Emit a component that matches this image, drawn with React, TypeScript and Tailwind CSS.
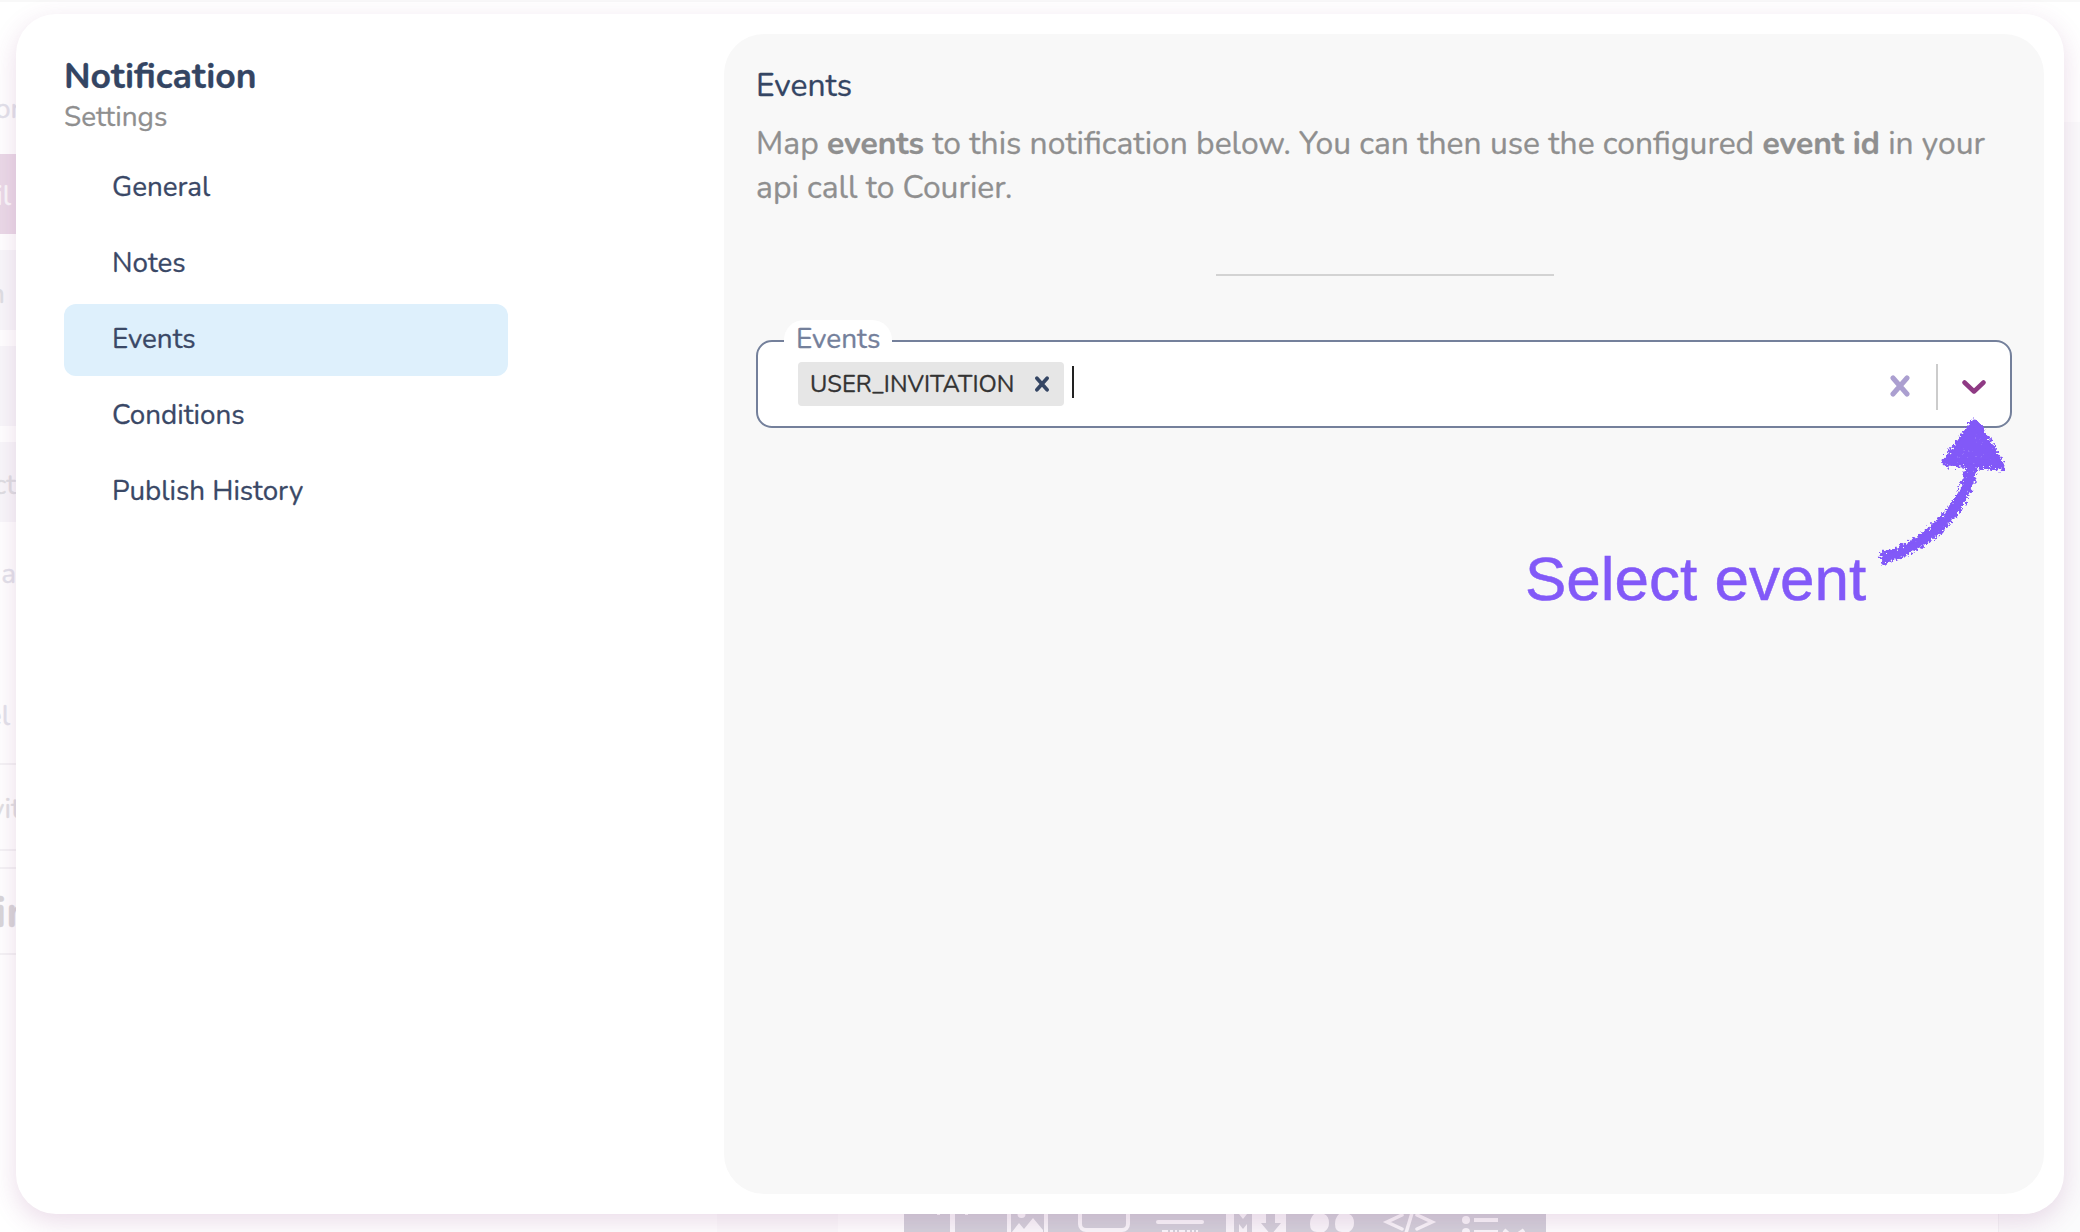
import type { ReactNode } from "react";

const navItems = ["General", "Notes", "Events", "Conditions", "Publish History"];

function CanvasSidebar() {
  return (
    <div className="flex w-4 flex-col overflow-hidden whitespace-nowrap text-[28px] leading-[38px] text-[#e2e2ea]">
      <div className="flex h-[154px] shrink-0 items-end pb-[26px]">
        <span className="-ml-[5px]">on</span>
      </div>
      <div className="flex h-[80px] shrink-0 items-center justify-end bg-[#ead9e7] pr-1.5 pt-1 text-[#fbf8fb]">
        <span className="-mr-px">il</span>
      </div>
      <div className="mt-4 flex h-[80px] shrink-0 items-center justify-end bg-[#f8f7fa] pr-[11px] pt-2 text-[#dedee2]">n</div>
      <div className="mt-4 h-[80px] shrink-0 bg-[#f8f7fa]" />
      <div className="mt-4 flex h-[80px] shrink-0 items-center justify-end bg-[#f8f7fa] pt-1.5 text-[#dedee2]">ct</div>
      <div className="flex h-[104px] shrink-0 items-center justify-end">a</div>
      <div className="flex h-[139px] shrink-0 items-end justify-end border-b-2 border-[#f4f3f5] pb-[28px] pr-1.5">el</div>
      <div className="flex h-[84px] shrink-0 items-center pt-1 text-[#e0dfe2]">
        <span className="-ml-[10px]">vit</span>
      </div>
      <div className="h-5 shrink-0 border-y-2 border-[#f4f3f5]" />
      <div className="flex h-[86px] shrink-0 items-center border-b-2 border-[#f4f3f5] pt-1 text-[44px] font-bold text-[#d8d6d9]">
        <span className="-ml-[5px]">in</span>
      </div>
    </div>
  );
}

function BlockToolbar() {
  return (
    <svg width="642" height="18" viewBox="904 1214 642 18" className="block bg-[#d3d1da]" fill="#faf8fb">
      <path d="M950 1214h5v18h-5zM937 1214h3v1h-3zM965 1214h3v1h-3z" />
      <path d="M1007 1214h4v18h-4zM1044 1214h4v18h-4zM1012 1232l7-9 5 6 9-11 10 12v2z" />
      <ellipse cx="1021.500" cy="1214" rx="4" ry="4" />
      <rect x="1080" y="1208" width="48" height="22" rx="6" fill="none" stroke="#faf8fb" strokeWidth="4" />
      <path d="M1158 1222h44" stroke="#faf8fb" strokeWidth="4" strokeLinecap="round" />
      <path d="M1162 1231h36" stroke="#faf8fb" strokeWidth="2" strokeDasharray="6 2 3 2 2 2" />
      <path d="M1226 1214h60v18h-60z" />
      <path d="M1234 1214h5l4 5 4-5h5v18h-5v-8l-4 5-4-5v8h-5z" fill="#d3d1da" />
      <path d="M1266 1214h9v9h6l-10 12-10-12h5z" fill="#d3d1da" />
      <path d="M1314 1214q-4 4-4 10 0 8 7 8h7q5-3 5-9 0-7-5-9zM1339 1214q-4 4-4 10 0 8 7 8h7q5-3 5-9 0-7-5-9z" />
      <path d="M1402 1215l-15 7 15 7M1417 1215l15 7-15 7M1412 1213l-6 20" fill="none" stroke="#faf8fb" strokeWidth="3.500" strokeLinecap="round" />
      <ellipse cx="1466" cy="1220" rx="4" ry="4" />
      <ellipse cx="1466" cy="1232" rx="4" ry="4" />
      <path d="M1474 1218h24v4h-24zM1474 1230h24v3h-24z" />
      <path d="M1504 1230l9 8 11-8" fill="none" stroke="#faf8fb" strokeWidth="4" />
    </svg>
  );
}

function Backdrop() {
  return (
    <div className="flex h-full flex-col border-t-2 border-[#f8f8f8] bg-white">
      <div className="-mt-0.5 flex min-h-0 flex-1">
        <CanvasSidebar />
        <div className="flex flex-1 items-end">
          <div className="h-[18px] w-[701px] bg-white" />
          <div className="h-[18px] w-[121px] bg-[#fcfbfc]" />
          <div className="h-[18px] w-[66px] bg-white" />
          <BlockToolbar />
        </div>
        <div className="mt-[122px] w-[82px] border-l border-[#f4f3f5] bg-[#fbfbfc]" />
      </div>
    </div>
  );
}

function NavItem({ active, children }: { active: boolean; children: ReactNode }) {
  return (
    <li className={`flex h-[72px] items-center rounded-xl pl-12 ${active ? "bg-[#def0fc]" : ""}`}>
      {children}
    </li>
  );
}

function Cross({ className, width }: { className: string; width: number }) {
  return (
    <svg viewBox="0 0 20 22" className={className} fill="none" stroke="currentColor" strokeWidth={width} strokeLinecap="round">
      <path d="M3 3l14 16M17 3L3 19" />
    </svg>
  );
}

function EventSelect() {
  return (
    <div className="relative mt-16 flex h-[88px] items-center rounded-2xl border-2 border-[#74809b] bg-white">
      <span className="absolute -top-[22px] left-[26px] h-9 rounded-t-[20px] bg-white px-3 text-[28px] leading-[38px] text-[#74809b]">
        Events
      </span>
      <div className="ml-10 flex h-11 items-center rounded bg-[#e6e6e6] pl-3 text-[23.8px] leading-[44px] text-[#333333]">
        <span className="w-[210px]">USER_INVITATION</span>
        <Cross className="mx-[14px] h-4 w-4 text-[#344563]" width={5} />
      </div>
      <div className="-mt-1 ml-2 h-8 w-0.5 bg-[#222222]" />
      <Cross className="ml-auto mt-1 h-[22px] w-5 text-[#ab9fd0]" width={5} />
      <div className="ml-[26px] mt-[6px] h-[46px] w-0.5 bg-[#cccccc]" />
      <svg width="24" height="15" viewBox="0 0 24 15" className="ml-6 mr-6 mt-[6px]" fill="none" stroke="#8f3a84" strokeWidth="4.500" strokeLinecap="round" strokeLinejoin="round">
        <path d="M2.500 2.500l9.500 9 9.500-9" />
      </svg>
    </div>
  );
}

function Annotation() {
  return (
    <div className="absolute left-[1525px] top-[410px] flex h-[220px] w-[500px] text-[#8259f8]">
      <p className="mt-[133px] w-[349px] whitespace-nowrap font-['Liberation_Sans',Arial,sans-serif] text-[62px] leading-[72px] [-webkit-text-stroke:0.5px]">
        Select event
      </p>
      <svg width="150" height="170" viewBox="1874 410 150 170" className="shrink-0">
        <defs>
          <filter id="crayon" x="-10%" y="-10%" width="120%" height="120%">
            <feTurbulence type="fractalNoise" baseFrequency="0.32" numOctaves="3" seed="7" result="noise" />
            <feDisplacementMap in="SourceGraphic" in2="noise" scale="10" xChannelSelector="R" yChannelSelector="G" result="rough" />
            <feColorMatrix in="noise" type="matrix" values="0 0 0 0 0  0 0 0 0 0  0 0 0 0 0  0 0 22 0 -5.600" result="grain" />
            <feComposite in="rough" in2="grain" operator="in" />
          </filter>
        </defs>
        <g filter="url(#crayon)">
          <path d="M1974.500 424L1946 462Q1972 463 2000 466Q1989 442 1974.500 424Z" fill="currentColor" stroke="currentColor" strokeWidth="9" strokeLinejoin="round" />
          <path d="M1972 465C1966 505 1936 542 1881 559" fill="none" stroke="currentColor" strokeWidth="12" />
        </g>
        <path d="M1974.500 422L1951 460Q1972 461 1995 463Q1986 442 1974.500 422Z" fill="currentColor" fillOpacity="0.85" stroke="currentColor" strokeWidth="5" strokeLinejoin="round" />
        <path d="M1972 465C1966 505 1936 542 1887 558" fill="none" stroke="currentColor" strokeWidth="6" />
      </svg>
    </div>
  );
}

export default function App() {
  return (
    <div className="relative h-[1232px] w-[2080px] overflow-hidden bg-white font-['Nunito','Lato',sans-serif] [-webkit-text-stroke:0.3px]">
      <Backdrop />
      <div className="absolute inset-x-4 bottom-[18px] top-[14px] flex rounded-[40px] bg-white shadow-[0_8px_26px_rgba(145,60,135,0.18)]">
        <aside className="w-[708px] pl-12 pt-[41px]">
          <h1 className="text-[35.6px] font-bold leading-[44px] text-[#344563]">Notification</h1>
          <p className="-mt-px text-[27.9px] leading-[38px] text-[#8f8f8f]">Settings</p>
          <ul className="mt-4 flex w-[444px] flex-col gap-1 text-[27.8px] text-[#3a4866]">
            {navItems.map((item) => (
              <NavItem key={item} active={item === "Events"}>
                {item}
              </NavItem>
            ))}
          </ul>
        </aside>
        <main className="my-5 mr-5 flex-1 rounded-[40px] bg-[#f8f8f8] px-8 pt-[30px]">
          <h2 className="text-[31.9px] leading-[44px] text-[#344563]">Events</h2>
          <p className="mt-3.5 text-[31.87px] leading-[44px] text-[#8f8f8f]">
            Map <b>events</b> to this notification below. You can then use the configured <b>event id</b> in your api
            call to Courier.
          </p>
          <div className="ml-[460px] mt-16 h-0.5 w-[338px] bg-[#d3d3d3]" />
          <EventSelect />
        </main>
      </div>
      <Annotation />
    </div>
  );
}
